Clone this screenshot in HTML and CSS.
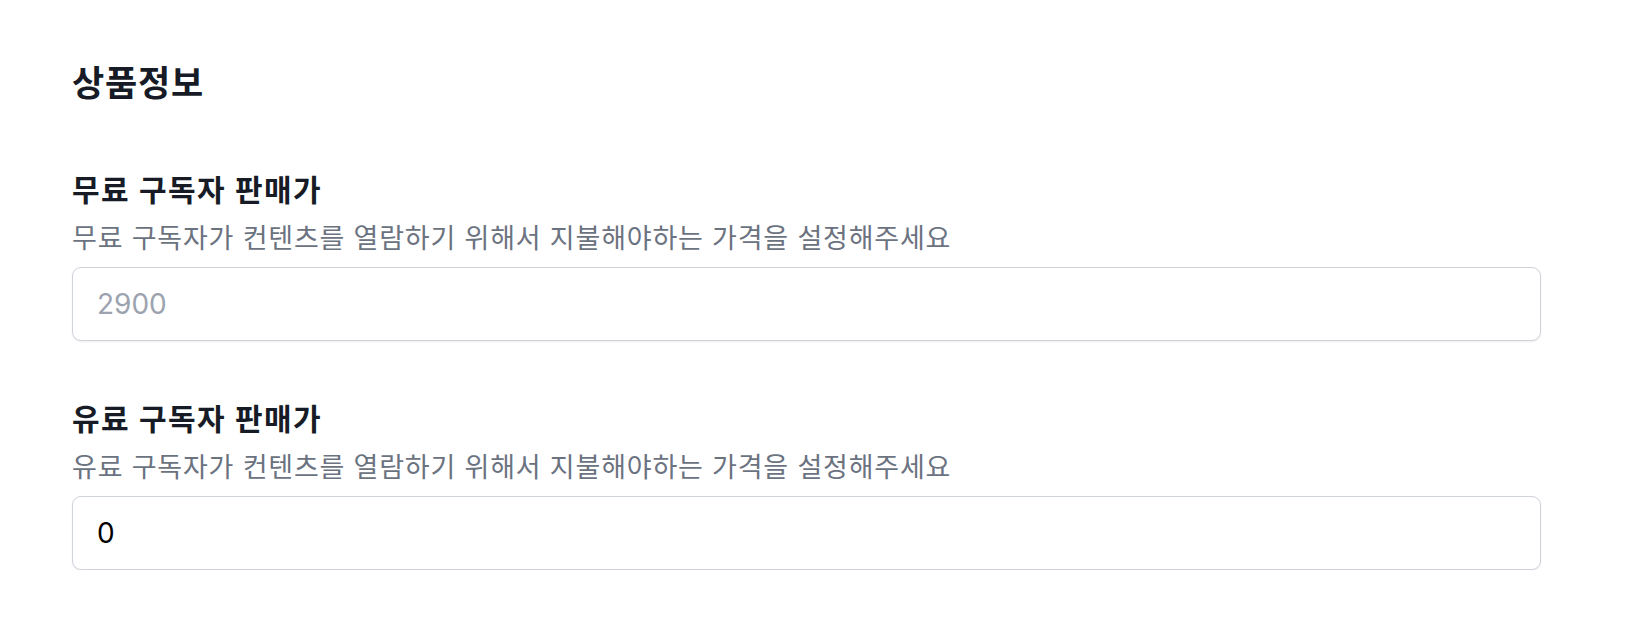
FILE: index.html
```html
<!DOCTYPE html>
<html lang="ko">
<head>
<meta charset="utf-8">
<title>상품정보</title>
<link rel="stylesheet" href="styles.css">
</head>
<body>
<main class="page">
  <h1 class="title">상품정보</h1>
  <section class="field field-first">
    <label class="label" for="free">무료 구독자 판매가</label>
    <p class="desc">무료 구독자가 컨텐츠를 열람하기 위해서 지불해야하는 가격을 설정해주세요</p>
    <input class="input" id="free" type="text" placeholder="2900">
  </section>
  <section class="field">
    <label class="label" for="paid">유료 구독자 판매가</label>
    <p class="desc">유료 구독자가 컨텐츠를 열람하기 위해서 지불해야하는 가격을 설정해주세요</p>
    <input class="input" id="paid" type="text" value="0">
  </section>
</main>
</body>
</html>
```
FILE: styles.css
```css
* { box-sizing: border-box; }
html, body { margin: 0; padding: 0; background: #ffffff; }
body {
  font-family: Inter, "Noto Sans CJK KR", sans-serif;
  color: #111827;
}
.page {
  padding: 63px 87px 0 72px;
  display: flex;
  flex-direction: column;
}
.title {
  margin: 0;
  font-size: 35px;
  line-height: 40px;
  font-weight: 700;
  letter-spacing: 0.8px;
  color: #161b26;
}
.field {
  display: flex;
  flex-direction: column;
  margin-top: 60px;
}
.field-first { margin-top: 69px; }
.label {
  font-size: 30px;
  line-height: 36px;
  font-weight: 600;
  letter-spacing: 1.4px;
  color: #161b26;
}
.desc {
  margin: 15px 0 12px;
  font-size: 27px;
  line-height: 32px;
  letter-spacing: 0.8px;
  color: #6b7280;
}
.input {
  width: 100%;
  height: 74px;
  padding: 0 24px;
  border: 1.5px solid #cfd3da;
  border-radius: 9px;
  box-shadow: 0 1px 2px rgba(0,0,0,0.07);
  font-family: Inter, "Noto Sans CJK KR", sans-serif;
  font-size: 28px;
  color: #000000;
  outline: none;
  background: #fff;
}
.input::placeholder { color: #9ca3af; }
```
